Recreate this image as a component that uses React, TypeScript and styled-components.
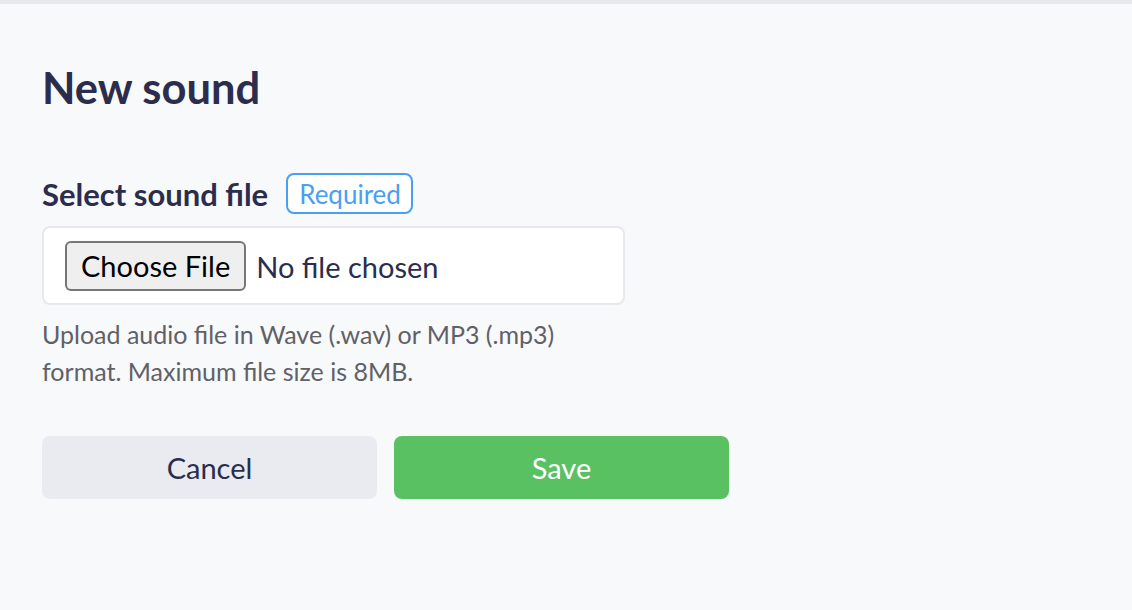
import React from "react";
import styled, { createGlobalStyle } from "styled-components";

const GlobalStyle = createGlobalStyle`
  html, body {
    margin: 0;
    padding: 0;
    background: #f8f9fb;
  }
  body {
    font-family: Lato, "Liberation Sans", sans-serif;
    color: #2c2d4d;
  }
`;

const Page = styled.div`
  min-height: 610px;
  border-top: 4px solid #e7e8ec;
  background: #f8f9fb;
  box-sizing: border-box;
`;

const Panel = styled.div`
  padding: 57px 42px 0;
  display: flex;
  flex-direction: column;
`;

const Title = styled.h1`
  margin: 0;
  font-size: 43.5px;
  line-height: 52px;
  font-weight: 700;
  color: #2c2d4d;
`;

const Field = styled.div`
  margin-top: 60px;
  width: 583px;
  display: flex;
  flex-direction: column;
`;

const LabelRow = styled.div`
  display: flex;
  align-items: center;
  gap: 18px;
  height: 41px;
`;

const Label = styled.label`
  font-size: 31px;
  font-weight: 700;
  color: #2c2d4d;
`;

const Badge = styled.span`
  display: inline-flex;
  align-items: center;
  box-sizing: border-box;
  height: 41px;
  padding: 0 10px 0 11px;
  border: 2px solid #4a9ef4;
  border-radius: 8px;
  color: #4a9ef4;
  font-size: 26px;
  background: #fff;
`;

const InputBox = styled.div`
  margin-top: 12px;
  box-sizing: border-box;
  height: 79px;
  padding: 0 21px;
  display: flex;
  align-items: center;
  background: #fff;
  border: 2px solid #e8e9ed;
  border-radius: 8px;
`;

const FileInput = styled.input`
  font-family: Lato, "Liberation Sans", sans-serif;
  font-size: 29px;
  color: #2c2d4d;

  &::file-selector-button {
    box-sizing: border-box;
    height: 50px;
    margin-right: 10px;
    padding: 0 14px;
    font-family: Lato, "Liberation Sans", sans-serif;
    font-size: 29px;
    color: #000;
    background: #efefef;
    border: 2px solid #767676;
    border-radius: 6px;
  }
`;

const Help = styled.p`
  margin: 11px 0 0;
  max-width: 560px;
  font-size: 25px;
  line-height: 37px;
  color: #606167;
`;

const Actions = styled.div`
  margin-top: 46px;
  display: flex;
  gap: 17px;
`;

const Button = styled.button<{ $primary?: boolean }>`
  width: 335px;
  height: 63px;
  border: none;
  border-radius: 8px;
  font-family: Lato, "Liberation Sans", sans-serif;
  font-size: 29px;
  background: ${(p) => (p.$primary ? "#5ac163" : "#e9ebf0")};
  color: ${(p) => (p.$primary ? "#ffffff" : "#2c2d4d")};
  cursor: pointer;
`;

export default function App() {
  return (
    <>
      <GlobalStyle />
      <Page>
        <Panel>
          <Title>New sound</Title>
          <Field>
            <LabelRow>
              <Label htmlFor="sound-file">Select sound file</Label>
              <Badge>Required</Badge>
            </LabelRow>
            <InputBox>
              <FileInput id="sound-file" type="file" accept=".wav,.mp3" />
            </InputBox>
            <Help>
              Upload audio file in Wave (.wav) or MP3 (.mp3) format. Maximum
              file size is 8MB.
            </Help>
          </Field>
          <Actions>
            <Button>Cancel</Button>
            <Button $primary>Save</Button>
          </Actions>
        </Panel>
      </Page>
    </>
  );
}
